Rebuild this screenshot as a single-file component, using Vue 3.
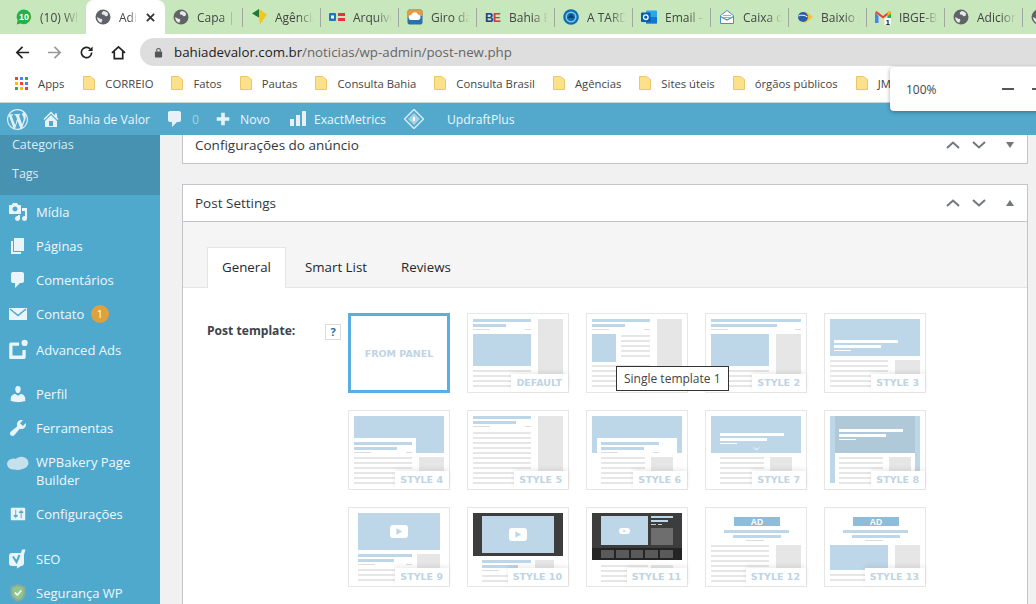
<script setup>
const GLOBE = '<circle cx="8" cy="8" r="7.5" fill="#5f6368"/><path d="M8.5 2c2 .1 3.6 1 4.6 2.5l-.6 2.6-2 .2-1.4-1.5-2-.2-.4-1.8L8.5 2zM2.2 8l3 1.8 1.7.2.5 1.5-1 1.5.2 1A6 6 0 0 1 2.2 8z" fill="#e8e8e8"/>'

const favicons = {
  globe: GLOBE,
  whats: '<path d="M8 .5a7.3 7.3 0 0 0-6.3 11L.7 15.4l4-1A7.3 7.3 0 1 0 8 .5z" fill="#25b04a"/><text x="8" y="11.2" font-size="9" font-weight="700" text-anchor="middle" fill="#fff" font-family="Liberation Sans, sans-serif">10</text>',
  agencia: '<path d="M8 0l8 5.500-7 10-1-7-7-4z" fill="#f5c518"/><path d="M8 0L1 4.500l7 4z" fill="#1b7a3d"/>',
  arquivo: '<rect x="0" y="4" width="7" height="8" rx="1" fill="#1c75bc"/><rect x="2" y="6.5" width="3" height="3" fill="#fff"/><rect x="9" y="4" width="7" height="3" fill="#e2343c"/><rect x="9" y="9" width="7" height="3" fill="#e2343c"/>',
  giro: '<rect x=".5" y=".5" width="15" height="15" rx="2" fill="#2a6fb0"/><path d="M.5 8V3A2.500 2.500 0 0 1 3 .5h10A2.500 2.500 0 0 1 15.500 3v4z" fill="#e99a3c"/><path d="M4 11a2.500 2.500 0 0 1 .3-5 3.500 3.500 0 0 1 6.700-.5 2.800 2.800 0 0 1 .5 5.500z" fill="#fff"/>',
  be: '<text x="0" y="12.500" font-size="12" font-weight="700" fill="#1d3f8f" font-family="Liberation Sans, sans-serif">B</text><text x="8" y="12.500" font-size="12" font-weight="700" fill="#e2343c" font-family="Liberation Sans, sans-serif">E</text>',
  tarde: '<circle cx="8" cy="8" r="7.800" fill="#0f6cb0"/><circle cx="8" cy="8" r="4.800" fill="none" stroke="#7cc6ee" stroke-width="1.600"/><path d="M4.500 9L8 5l3.500 4z" fill="#0b3f70"/>',
  outlook: '<rect x="5" y="1.500" width="11" height="13" rx="1" fill="#28a8ea"/><rect x="5" y="8" width="11" height="6.500" fill="#0f78d4"/><rect x="0" y="3.500" width="9.500" height="9.500" rx="1" fill="#0a5ca8"/><circle cx="4.800" cy="8.200" r="2.300" fill="none" stroke="#fff" stroke-width="1.300"/>',
  caixa: '<path d="M1.500 6.500L8 1.500l6.500 5v8h-13z" fill="#fff" stroke="#4b8fc7"/><path d="M4 6.500h8M4.500 8.500h7" stroke="#e9a23b" stroke-width="1"/><path d="M1.500 7.500L8 11l6.500-3.500" fill="none" stroke="#4b8fc7" stroke-width="1.200"/>',
  baixio: '<path d="M8 2l8 6-8 6-2-1z" fill="#f2c230"/><circle cx="6" cy="8" r="5" fill="#2a5cae"/><path d="M1.500 7c3-1.500 6-1 9 1" stroke="#fff" fill="none"/>',
  gmail: '<path d="M0 3.500v10.500h3.500V7z" fill="#4285f4"/><path d="M16 3.500v6h-3.500V7z" fill="#34a853"/><path d="M0 3.500L8 9.500l8-6-1.500-1.500L8 7 1.500 2z" fill="#ea4335"/><path d="M12.500 3v4L16 4.500 14.500 2z" fill="#fbbc04"/><rect x="9.500" y="9" width="6.500" height="7" fill="#fff"/><text x="12.700" y="15.500" font-size="8" font-weight="700" text-anchor="middle" fill="#222" font-family="Liberation Sans, sans-serif">1</text>',
}

const tabs = [
  { icon: 'whats', title: '(10) WhatsApp' },
  { icon: 'globe', title: 'Adicionar', active: true },
  { icon: 'globe', title: 'Capa | Bahia' },
  { icon: 'agencia', title: 'Agência Brasil' },
  { icon: 'arquivo', title: 'Arquivo Aberto' },
  { icon: 'giro', title: 'Giro da Bahia' },
  { icon: 'be', title: 'Bahia Econômica' },
  { icon: 'tarde', title: 'A TARDE' },
  { icon: 'outlook', title: 'Email – Outlook' },
  { icon: 'caixa', title: 'Caixa de entrada' },
  { icon: 'baixio', title: 'Baixio do Brasil' },
  { icon: 'gmail', title: 'IBGE-Bahia' },
  { icon: 'globe', title: 'Adicionar' },
  { icon: 'globe', title: 'Adicionar' },
]

const bookmarks = ['CORREIO', 'Fatos', 'Pautas', 'Consulta Bahia', 'Consulta Brasil', 'Agências', 'Sites úteis', 'órgãos públicos', 'JM Online']
const appColors = ['#ea4335', '#4285f4', '#34a853', '#fbbc04', '#ea4335', '#4285f4', '#34a853', '#fbbc04', '#ea4335']

const menuIcons = {
  media: '<path d="M13 11V4c0-.55-.45-1-1-1h-1.670L9 1H5L3.670 3H2c-.55 0-1 .45-1 1v7c0 .55.45 1 1 1h10c.55 0 1-.45 1-1zM7 4.500c1.380 0 2.500 1.120 2.500 2.500S8.380 9.500 7 9.500 4.500 8.380 4.500 7 5.620 4.500 7 4.500zM14 6h5v10.500c0 1.380-1.120 2.500-2.500 2.500S14 17.880 14 16.500s1.120-2.500 2.500-2.500c.17 0 .34.02.5.05V9h-3V6zm-4 8.050V13h2v3.500c0 1.380-1.120 2.500-2.500 2.500S7 17.880 7 16.500 8.120 14 9.500 14c.17 0 .34.02.5.05z"/>',
  pages: '<path d="M6 15V2h10v13H6zm-1 1h8v2H3V5h2v11z"/>',
  comments: '<path d="M5 2h9c1.100 0 2 .9 2 2v7c0 1.100-.9 2-2 2h-2l-5 5v-5H5c-1.100 0-2-.9-2-2V4c0-1.100.9-2 2-2z"/>',
  mail: '<path d="M1 4h18v12H1z"/><path d="M2 5l8 6.500L18 5" fill="none" stroke="#4fa9cd" stroke-width="1.500"/>',
  ads: '<path d="M2 5.500A1.500 1.500 0 0 1 3.500 4H11v3H5v9h9v-5h3v6.500a1.500 1.500 0 0 1-1.500 1.500h-12A1.500 1.500 0 0 1 2 18.500z"/><circle cx="16" cy="4.500" r="2.800"/>',
  user: '<path d="M10 9.250c-2.270 0-2.730-3.440-2.730-3.440C7 4.020 7.820 2 9.970 2c2.160 0 2.980 2.020 2.710 3.810 0 0-.41 3.440-2.680 3.440zm0 2.570L12.720 10c2.390 0 4.520 2.330 4.520 4.530v2.490s-3.650 1.130-7.240 1.130c-3.650 0-7.240-1.130-7.240-1.130v-2.490c0-2.250 1.940-4.480 4.470-4.480z"/>',
  tools: '<path d="M16.680 9.770c-1.340 1.340-3.300 1.670-4.950.99l-5.410 6.520c-.99.99-2.590.99-3.580 0s-.99-2.590 0-3.570l6.520-5.420c-.68-1.650-.35-3.610.99-4.950 1.280-1.280 3.120-1.620 4.720-1.060l-2.890 2.890 2.820 2.820 2.860-2.870c.53 1.580.18 3.390-1.080 4.650z"/>',
  cloud: '<ellipse cx="6" cy="10" rx="6" ry="5"/><ellipse cx="13" cy="9" rx="6.500" ry="5.500"/><ellipse cx="10" cy="12" rx="5" ry="3.500"/>',
  settings: '<path d="M18 16V4c0-.55-.45-1-1-1H3c-.55 0-1 .45-1 1v12c0 .55.45 1 1 1h14c.55 0 1-.45 1-1zM8 11h1c.55 0 1 .45 1 1s-.45 1-1 1H8v1.500c0 .28-.22.5-.5.5s-.5-.22-.5-.5V13H6c-.55 0-1-.45-1-1s.45-1 1-1h1V5.500c0-.28.22-.5.5-.5s.5.22.5.5V11zm5-2h-1c-.55 0-1-.45-1-1s.45-1 1-1h1V5.500c0-.28.22-.5.5-.5s.5.22.5.5V7h1c.55 0 1 .45 1 1s-.45 1-1 1h-1v5.500c0 .28-.22.5-.5.5s-.5-.22-.5-.5V9z"/>',
  seo: '<rect x="1" y="4" width="15" height="13" rx="3"/><path d="M14 .5h3.500l-5 17-4 2 1-3z"/><path d="M5 7.500l3.500 5.500L11.500 6" fill="none" stroke="#4fa9cd" stroke-width="2"/>',
  shield: '<path d="M10 1l7.500 2.500v6c0 4.500-3 8-7.500 9.500-4.500-1.500-7.500-5-7.500-9.500v-6z" fill="#8fa7a0"/><path d="M10 3l5.500 2v4.500c0 3.500-2.200 6-5.500 7.300-3.300-1.300-5.500-3.800-5.500-7.300V5z" fill="#8ec98a"/><path d="M7 9.500l2.300 2.500 4-4.500" fill="none" stroke="#fff" stroke-width="1.600"/>',
}

const menu = [
  { icon: 'media', label: 'Mídia' },
  { icon: 'pages', label: 'Páginas' },
  { icon: 'comments', label: 'Comentários' },
  { icon: 'mail', label: 'Contato', badge: 1 },
  { icon: 'ads', label: 'Advanced Ads', gapAfter: true, pushed: true },
  { icon: 'user', label: 'Perfil' },
  { icon: 'tools', label: 'Ferramentas' },
  { icon: 'cloud', label: 'WPBakery Page Builder', tall: true },
  { icon: 'settings', label: 'Configurações', gapAfter: true },
  { icon: 'seo', label: 'SEO' },
  { icon: 'shield', label: 'Segurança WP' },
]

const BLUE = '#bed7e8'
const GREY = '#e6e6e6'
const META = '#dcdcdc'
const WHITE = '#ffffff'

const r = (x1, y1, x2, y2, fill = GREY, rx = 0) => ({ x: x1, y: y1, width: x2 - x1, height: y2 - y1, fill, rx })
const rows = (x1, x2, ys, fill = GREY) => ys.map((y) => r(x1, y, x2, y + 2, fill))
const head = (x, a, b, y, end, color = BLUE, meta = META) => [
  r(x, y, a, y + 3, color),
  r(x, y + 5, b, y + 8, color),
  r(x, y + 10, x + 17, y + 11, meta),
  ...(end ? [r(end - 6, y + 10, end, y + 11, meta)] : []),
]
const play = (x, y, w, h) => [r(x, y, x + w, y + h, WHITE, 3)]
const playTri = (x, y, w, h) => {
  const cx = x + w / 2
  const cy = y + h / 2
  const s = h / 4
  return { d: `M${cx - s * 0.8} ${cy - s}L${cx + s} ${cy}L${cx - s * 0.8} ${cy + s}z`, fill: BLUE }
}
const adLines = () => [r(19, 23, 84, 26, BLUE), r(28, 28, 76, 31, BLUE), r(41, 33, 59, 34, META)]

const thumbs = [
  { label: 'FROM PANEL', selected: true, shapes: [] },
  {
    label: 'DEFAULT',
    shapes: [...head(6, 64, 39, 6, 64), r(6, 21, 64, 53, BLUE), r(71, 6, 96, 61), ...rows(6, 64, [57, 62, 67, 72])],
  },
  {
    label: 'STYLE 1',
    tooltip: 'Single template 1',
    shapes: [
      ...head(6, 64, 39, 6, 64), r(6, 21, 30, 49, BLUE), ...rows(35, 64, [22, 27, 32, 37, 42]),
      r(71, 6, 96, 61), ...rows(6, 64, [52, 57, 62, 67, 72]),
    ],
  },
  {
    label: 'STYLE 2',
    shapes: [
      r(6, 6, 96, 9, BLUE), r(6, 11, 72, 14, BLUE), r(6, 16, 23, 17, META), r(90, 16, 96, 17, META),
      r(6, 21, 64, 53, BLUE), r(71, 21, 96, 61), ...rows(6, 64, [57, 62, 67, 72]),
    ],
  },
  {
    label: 'STYLE 3',
    shapes: [
      r(6, 6, 96, 43, BLUE), r(10, 27, 74, 30, WHITE), r(10, 32, 57, 35, WHITE), r(10, 37, 27, 38, WHITE),
      ...rows(6, 64, [47, 52, 57, 62, 67, 72]), r(71, 47, 96, 61),
    ],
  },
  {
    label: 'STYLE 4',
    shapes: [
      r(6, 6, 96, 43, BLUE), r(6, 28, 68, 43, WHITE), ...head(6, 64, 49, 32, 64),
      ...rows(6, 64, [47, 52, 57, 62, 67, 72]), r(71, 47, 96, 61),
    ],
  },
  {
    label: 'STYLE 5',
    shapes: [...head(6, 64, 49, 6, 64), ...rows(6, 64, [22, 27, 32, 37, 42, 47, 52, 57, 62, 67, 72]), r(71, 6, 96, 61)],
  },
  {
    label: 'STYLE 6',
    shapes: [
      r(6, 6, 96, 43, BLUE), r(11, 28, 91, 43, WHITE), ...head(15, 73, 58, 32, 73),
      ...rows(15, 59, [47, 52, 57, 62, 67, 72]), r(65, 47, 87, 61),
    ],
  },
  {
    label: 'STYLE 7',
    shapes: [
      r(6, 6, 96, 43, BLUE), r(15, 23, 79, 26, WHITE), r(15, 28, 62, 31, WHITE), r(15, 33, 32, 34, WHITE),
      ...rows(15, 59, [47, 52, 57, 62, 67, 72]), r(65, 47, 87, 61),
    ],
    paths: [{ d: 'M49 37.500l2.500 2.500 2.500-2.500', stroke: WHITE }],
  },
  {
    label: 'STYLE 8',
    shapes: [
      r(6, 6, 96, 73, BLUE), r(11, 6, 91, 43, '#afc9d8'), r(11, 43, 91, 80, WHITE),
      r(15, 19, 79, 22, WHITE), r(15, 24, 62, 27, WHITE), r(15, 29, 32, 30, WHITE),
      ...rows(15, 59, [47, 52, 57, 62, 67, 72]), r(65, 47, 87, 61),
    ],
  },
  {
    label: 'STYLE 9',
    shapes: [
      r(10, 6, 92, 43, BLUE), ...play(42, 18, 18, 13), ...head(10, 64, 46, 47, 64),
      ...rows(10, 64, [62, 67, 72]), r(69, 47, 92, 61),
    ],
    paths: [playTri(42, 18, 18, 13)],
  },
  {
    label: 'STYLE 10',
    shapes: [
      r(6, 6, 96, 49, '#3d3d3d'), r(15, 9, 87, 46, BLUE), ...play(42, 21, 18, 13), ...head(15, 64, 51, 53, 64),
      ...rows(15, 64, [68, 73]), r(68, 53, 87, 61),
    ],
    paths: [playTri(42, 21, 18, 13)],
  },
  {
    label: 'STYLE 11',
    shapes: [
      r(6, 6, 96, 41, '#3d3d3d'), r(6, 41, 96, 53, '#242424'), r(15, 9, 62, 38, BLUE), ...play(33, 21, 11, 6),
      r(65, 9, 87, 11, BLUE), r(65, 13, 82, 15, BLUE), r(65, 17, 70, 18, '#cccccc'), r(72, 17, 76, 18, '#cccccc'),
      r(65, 21, 87, 38, '#6e6e6e'),
      r(15, 43, 28, 51, '#5a5a5a'), r(30, 43, 43, 51, '#5a5a5a'), r(45, 43, 57, 51, '#5a5a5a'),
      r(59, 43, 72, 51, '#5a5a5a'), r(74, 43, 87, 51, '#5a5a5a'),
      ...rows(15, 62, [58, 63, 68, 73]), r(65, 58, 87, 61),
    ],
    paths: [playTri(33, 21, 11, 6)],
  },
  {
    label: 'STYLE 12',
    adBar: true,
    shapes: [
      r(29, 10, 75, 19, '#8fbcd9'), ...adLines(), ...rows(6, 64, [38, 43, 48, 53, 58, 63, 68, 73]), r(71, 38, 96, 61),
    ],
  },
  {
    label: 'STYLE 13',
    adBar: true,
    shapes: [
      r(29, 10, 75, 19, '#8fbcd9'), ...adLines(), r(6, 38, 64, 63, BLUE), r(71, 38, 96, 61), ...rows(6, 64, [67, 72]),
    ],
  },
]
</script>

<template>
  <div class="screen">
    <!-- browser -->
    <div class="tabstrip">
      <div v-for="(t, i) in tabs" :key="i" class="tab" :class="{ active: t.active }">
        <svg class="fav" viewBox="0 0 16 16" v-html="favicons[t.icon]"></svg>
        <span class="tab-title" :class="{ short: t.active }">{{ t.title }}</span>
        <svg v-if="t.active" class="tab-close" viewBox="0 0 10 10"><path d="M1 1l8 8M9 1l-8 8" /></svg>
      </div>
    </div>

    <div class="toolbar">
      <svg class="nav" viewBox="0 0 16 16"><path d="M15 8H2M8 2L2 8l6 6" fill="none" stroke="#222" stroke-width="1.800" /></svg>
      <svg class="nav" viewBox="0 0 16 16"><path d="M1 8h13M8 2l6 6-6 6" fill="none" stroke="#999" stroke-width="1.800" /></svg>
      <svg class="nav" viewBox="0 0 16 16"><path d="M13.500 8a5.500 5.500 0 1 1-1.600-3.900" fill="none" stroke="#222" stroke-width="1.800" /><path d="M14.500 1.500v5h-5z" fill="#222" /></svg>
      <svg class="nav" viewBox="0 0 16 16"><path d="M1 8.500L8 2l7 6.500M3.500 7v7.500h9V7" fill="none" stroke="#222" stroke-width="1.800" /></svg>
      <div class="omnibox">
        <svg class="lock" viewBox="0 0 10 12"><rect x="1" y="5" width="8" height="6.500" rx="1" fill="#555" /><path d="M3 5V3.500a2 2 0 0 1 4 0V5" fill="none" stroke="#555" stroke-width="1.200" /></svg>
        <span class="url"><b>bahiadevalor.com.br</b>/noticias/wp-admin/post-new.php</span>
      </div>
    </div>

    <div class="bookmarks">
      <div class="apps-grid">
        <i v-for="(c, i) in appColors" :key="i" :style="{ background: c }"></i>
      </div>
      <span class="bm-text apps-label">Apps</span>
      <div v-for="b in bookmarks" :key="b" class="bm">
        <svg class="folder" viewBox="0 0 12 14"><path d="M.5.500h7l4 3v10H.500z" fill="#fde08a" stroke="#e8c868" /></svg>
        <span class="bm-text">{{ b }}</span>
      </div>
    </div>

    <div class="zoom-pop">
      <span>100%</span>
      <i class="zoom-minus"></i>
      <i class="zoom-plus"></i>
    </div>

    <!-- wordpress -->
    <div class="adminbar">
      <svg class="wp-logo" viewBox="0 0 20 20"><path d="M20 10c0-5.510-4.490-10-10-10C4.480 0 0 4.490 0 10c0 5.520 4.480 10 10 10 5.510 0 10-4.480 10-10zM7.780 15.370L4.370 6.220c.55-.02 1.170-.08 1.170-.08.5-.06.44-1.130-.06-1.110 0 0-1.450.11-2.370.11-.18 0-.37 0-.58-.01C4.120 2.690 6.870 1.110 10 1.110c2.330 0 4.450.87 6.050 2.340-.68-.11-1.650.39-1.650 1.580 0 .74.45 1.360.9 2.100.35.61.55 1.360.55 2.460 0 1.490-1.400 5-1.400 5l-3.030-8.370c.54-.02.82-.17.82-.17.5-.05.44-1.250-.06-1.220 0 0-1.440.12-2.380.12-.87 0-2.330-.12-2.330-.12-.5-.03-.56 1.200-.06 1.220l.92.08 1.260 3.410zM17.410 10c.24-.64.74-1.870.43-4.250.7 1.290 1.050 2.710 1.050 4.250 0 3.290-1.730 6.240-4.400 7.780.97-2.590 1.940-5.200 2.920-7.780zM6.100 18.090C3.120 16.650 1.110 13.530 1.110 10c0-1.300.23-2.480.72-3.590C3.250 10.300 4.670 14.200 6.100 18.090zm4.030-6.630l2.580 6.980c-.86.29-1.760.45-2.710.45-.79 0-1.570-.11-2.290-.33.81-2.380 1.620-4.740 2.420-7.100z" /></svg>
      <div class="ab-item home">
        <svg viewBox="0 0 20 20"><path d="M16 8.500l1.530 1.530-1.060 1.060L10 4.620l-6.470 6.470-1.060-1.060L10 2.500l4 4v-2h2v4zm-6-2.460l6 5.990V18H4v-5.970zM12 17v-5H8v5h4z" /></svg>
        <span>Bahia de Valor</span>
      </div>
      <div class="ab-item comments">
        <svg viewBox="0 0 20 20"><path d="M5 2h9c1.100 0 2 .9 2 2v7c0 1.100-.9 2-2 2h-2l-5 5v-5H5c-1.100 0-2-.9-2-2V4c0-1.100.9-2 2-2z" /></svg>
        <span class="dim">0</span>
      </div>
      <div class="ab-item novo">
        <svg viewBox="0 0 20 20"><path d="M8 3h4v5h5v4h-5v5H8v-5H3V8h5z" /></svg>
        <span>Novo</span>
      </div>
      <div class="ab-item metrics">
        <svg viewBox="0 0 16 16"><path d="M0 8h4v7H0zM6 4h4v11H6zM12 0h4v15h-4z" /></svg>
        <span>ExactMetrics</span>
      </div>
      <svg class="diamond" viewBox="0 0 20 20"><path d="M10 .5L19.500 10 10 19.500.5 10z" fill="none" stroke="#d7ebf3" stroke-width="1.500" /><path d="M10 4l6 6-6 6-6-6z" fill="#a9d3e5" /><path d="M9 8h2v4H9z" fill="#fff" /></svg>
      <span class="ab-updraft">UpdraftPlus</span>
    </div>

    <div class="main">
      <aside class="sidebar">
        <div class="submenu">
          <div>Categorias</div>
          <div>Tags</div>
        </div>
        <div
          v-for="m in menu"
          :key="m.label"
          class="menu-item"
          :class="{ tall: m.tall, gap: m.gapAfter, pushed: m.pushed }"
        >
          <svg class="menu-icon" :class="'ic-' + m.icon" viewBox="0 0 20 20" v-html="menuIcons[m.icon]"></svg>
          <span class="menu-label">{{ m.label }}</span>
          <span v-if="m.badge" class="menu-badge">{{ m.badge }}</span>
        </div>
      </aside>

      <section class="content">
        <div class="postbox first">
          <div class="box-head">
            <span>Configurações do anúncio</span>
            <div class="box-ctrl">
              <svg viewBox="0 0 14 8"><path d="M1 7l6-5.500L13 7" /></svg>
              <svg viewBox="0 0 14 8"><path d="M1 1l6 5.500L13 1" /></svg>
              <i class="tri down"></i>
            </div>
          </div>
        </div>

        <div class="postbox">
          <div class="box-head bordered">
            <span>Post Settings</span>
            <div class="box-ctrl">
              <svg viewBox="0 0 14 8"><path d="M1 7l6-5.500L13 7" /></svg>
              <svg viewBox="0 0 14 8"><path d="M1 1l6 5.500L13 1" /></svg>
              <i class="tri up"></i>
            </div>
          </div>

          <div class="tabs-band">
            <div class="set-tab on">General</div>
            <div class="set-tab">Smart List</div>
            <div class="set-tab">Reviews</div>
          </div>

          <div class="form-row">
            <label class="form-label">Post template:</label>
            <span class="help">?</span>
            <div class="thumb-grid">
              <div v-for="t in thumbs" :key="t.label" class="thumb" :class="{ selected: t.selected }">
                <template v-if="t.selected">
                  <span class="panel-text">{{ t.label }}</span>
                </template>
                <template v-else>
                  <svg class="thumb-art" viewBox="0 0 102 80" width="102" height="80">
                    <rect
                      v-for="(s, i) in t.shapes"
                      :key="i"
                      :x="s.x"
                      :y="s.y"
                      :width="s.width"
                      :height="s.height"
                      :rx="s.rx"
                      :fill="s.fill"
                    />
                    <path
                      v-for="(p, i) in t.paths"
                      :key="'p' + i"
                      :d="p.d"
                      :fill="p.fill || 'none'"
                      :stroke="p.stroke || 'none'"
                    />
                    <text
                      v-if="t.adBar"
                      x="52"
                      y="17.500"
                      font-size="8.500"
                      font-weight="700"
                      text-anchor="middle"
                      fill="#fff"
                      font-family="Liberation Sans, sans-serif"
                    >AD</text>
                  </svg>
                  <span class="thumb-label">{{ t.label }}</span>
                </template>
                <span v-if="t.tooltip" class="tooltip">{{ t.tooltip }}</span>
              </div>
            </div>
          </div>
        </div>
      </section>
    </div>
  </div>
</template>

<style>
html, body { margin: 0; overflow: hidden; background: #f1f1f1; }
</style>

<style scoped>
.screen {
  position: relative;
  width: 1036px;
  height: 604px;
  overflow: hidden;
  display: flex;
  flex-direction: column;
  font-family: "Open Sans", "Noto Sans", sans-serif;
  background: #f1f1f1;
}

/* chrome tabs */
.tabstrip {
  display: flex;
  height: 34px;
  flex: none;
  padding-left: 8px;
  background: #c9e7bd;
  overflow: hidden;
}
.tab {
  flex: none;
  width: 78px;
  box-sizing: border-box;
  display: flex;
  align-items: center;
  padding-left: 8px;
  position: relative;
}
.tab::after {
  content: "";
  position: absolute;
  right: 0;
  top: 8px;
  height: 19px;
  width: 1px;
  background: #a0a8a0;
}
.tab:nth-child(1)::after,
.tab.active::after { display: none; }
.tab.active {
  width: 79px;
  background: #fff;
  border-radius: 8px 8px 0 0;
  padding-left: 9px;
}
.fav { width: 16px; height: 16px; flex: none; }
.tab-title {
  margin-left: 8px;
  width: 39px;
  overflow: hidden;
  white-space: nowrap;
  font-size: 12px;
  color: #444;
  -webkit-mask-image: linear-gradient(to right, #000 60%, transparent 100%);
  mask-image: linear-gradient(to right, #000 60%, transparent 100%);
}
.tab-title.short { width: 18px; }
.tab-close {
  width: 9px;
  height: 9px;
  margin-left: 9px;
  fill: none;
  stroke: #333;
  stroke-width: 2;
}

/* toolbar */
.toolbar {
  height: 32px;
  flex: none;
  display: flex;
  align-items: flex-end;
  background: #fff;
  padding-left: 15px;
}
.nav {
  width: 15px;
  height: 15px;
  margin-right: 17px;
  margin-bottom: 6px;
  flex: none;
}
.omnibox {
  flex: 1;
  height: 28px;
  margin-left: -3px;
  border-radius: 14px 0 0 14px;
  background: #dedede;
  display: flex;
  align-items: center;
  padding-left: 14px;
}
.lock { width: 9px; height: 11px; flex: none; }
.url {
  margin-left: 11px;
  font-size: 13.3px;
  color: #666;
  white-space: nowrap;
}
.url b { font-weight: 400; color: #222; }

/* bookmarks */
.bookmarks {
  height: 37px;
  flex: none;
  display: flex;
  align-items: center;
  box-sizing: border-box;
  background: #fff;
  border-bottom: 1px solid #c8d4d8;
  padding: 0 0 2px 15px;
  overflow: hidden;
  white-space: nowrap;
}
.apps-grid {
  width: 13px;
  display: grid;
  grid-template-columns: repeat(3, 3px);
  gap: 2px;
  flex: none;
}
.apps-grid i { height: 3px; display: block; }
.apps-label { margin-left: 10px; margin-right: 19px; }
.bm { display: flex; align-items: center; margin-right: 18px; flex: none; }
.folder { width: 12px; height: 14px; margin-right: 10px; flex: none; }
.bm-text { font-size: 11.3px; color: #444; }

/* zoom bubble */
.zoom-pop {
  position: absolute;
  left: 890px;
  top: 67px;
  width: 160px;
  height: 44px;
  box-sizing: border-box;
  padding-left: 16px;
  background: #fff;
  border-radius: 4px;
  box-shadow: 0 1px 4px rgba(0, 0, 0, 0.35);
  display: flex;
  align-items: center;
  font-size: 12px;
  color: #444;
  z-index: 5;
}
.zoom-minus, .zoom-plus {
  position: absolute;
  top: 21px;
  height: 2px;
  background: #555;
}
.zoom-minus { left: 112px; width: 12px; }
.zoom-plus { left: 142px; width: 12px; }

/* admin bar */
.adminbar {
  height: 32px;
  flex: none;
  display: flex;
  align-items: center;
  background: #52a9cc;
  color: #eef6fa;
  font-size: 12.2px;
  padding-left: 7px;
  white-space: nowrap;
}
.wp-logo { width: 21px; height: 21px; fill: #e2f0f6; flex: none; }
.ab-item { display: flex; align-items: center; flex: none; }
.ab-item svg { fill: #e6f2f7; flex: none; }
.home { margin-left: 15px; }
.home svg { width: 20px; height: 20px; margin-right: 7px; margin-left: -2px; }
.comments { margin-left: 15px; }
.comments svg { width: 20px; height: 20px; margin-right: 7px; }
.dim { color: #a6d2e4; }
.novo { margin-left: 16px; }
.novo svg { width: 18px; height: 18px; margin-right: 8px; margin-left: -1px; }
.metrics { margin-left: 20px; }
.metrics svg { width: 16px; height: 16px; margin-right: 8px; }
.diamond { width: 20px; height: 20px; margin-left: 18px; flex: none; }
.ab-updraft { margin-left: 23px; }

/* layout */
.main { flex: 1; display: flex; min-height: 0; }
.sidebar {
  width: 160px;
  flex: none;
  background: #4fa9cd;
  color: #f0f8fb;
  font-size: 13px;
  overflow: hidden;
}
.submenu {
  height: 60px;
  box-sizing: border-box;
  background: #4791b1;
  padding: 1px 0 0 12px;
  color: #dcedf4;
  font-size: 12.5px;
  line-height: 18px;
  display: flex;
  flex-direction: column;
  gap: 11px;
}
.menu-item {
  height: 34px;
  box-sizing: border-box;
  display: flex;
  align-items: center;
  position: relative;
  padding-left: 36px;
}
.menu-item.tall { height: 52px; line-height: 18px; }
.menu-item.gap { margin-bottom: 11px; }
.menu-item.pushed { height: 35px; padding-top: 2px; }
.menu-icon {
  position: absolute;
  left: 8px;
  top: 50%;
  width: 20px;
  height: 20px;
  margin-top: -10px;
  fill: #e9f5fa;
}
.ic-ads { left: 7px; width: 22px; height: 22px; margin-top: -11px; }
.ic-cloud { left: 7px; margin-top: -18px; width: 22px; height: 22px; fill: #c6e1ec; }
.ic-settings { width: 18px; height: 18px; margin-top: -9px; left: 9px; }
.menu-label { width: 112px; }
.menu-badge {
  width: 18px;
  height: 18px;
  border-radius: 50%;
  background: #dea13b;
  color: #fff;
  font-size: 11px;
  line-height: 18px;
  text-align: center;
  margin-left: -57px;
  flex: none;
}

/* content */
.content {
  flex: 1;
  min-width: 0;
  padding: 0 8px 0 22px;
}
.postbox {
  background: #fff;
  border: 1px solid #c3c4c7;
  color: #32373c;
}
.postbox.first {
  border-top: 0;
  margin-bottom: 20px;
}
.box-head {
  height: 36px;
  display: flex;
  align-items: center;
  justify-content: space-between;
  padding: 0 12px;
  font-size: 13.5px;
}
.first .box-head { height: 20px; padding-bottom: 8px; }
.box-head.bordered { border-bottom: 1px solid #c3c4c7; }
.box-ctrl {
  display: flex;
  align-items: center;
}
.box-ctrl svg {
  width: 14px;
  height: 8px;
  margin-right: 12px;
  fill: none;
  stroke: #72777c;
  stroke-width: 2;
}
.tri {
  display: block;
  width: 0;
  height: 0;
  margin-left: 8px;
  margin-right: 1px;
  border-left: 4px solid transparent;
  border-right: 4px solid transparent;
}
.tri.down { border-top: 6px solid #72777c; }
.tri.up { border-bottom: 6px solid #72777c; }

.tabs-band {
  height: 66px;
  box-sizing: border-box;
  display: flex;
  align-items: flex-end;
  padding-left: 24px;
  background: #f5f5f5;
  border-bottom: 1px solid #e5e5e5;
}
.set-tab {
  height: 41px;
  box-sizing: border-box;
  display: flex;
  align-items: center;
  padding: 0 17px 2px;
  font-size: 13.3px;
  color: #23282d;
  margin-bottom: -1px;
}
.set-tab.on {
  width: 79px;
  justify-content: center;
  padding: 0 0 2px;
  margin-right: 2px;
  background: #fff;
  border: 1px solid #e5e5e5;
  border-bottom: 0;
}
.form-row {
  display: flex;
  padding: 25px 0 30px 24px;
  background: #fff;
  min-height: 300px;
  box-sizing: border-box;
}
.form-label {
  width: 118px;
  flex: none;
  font-size: 12.1px;
  font-weight: 700;
  color: #3c434a;
  line-height: 18px;
  margin-top: 9px;
}
.help {
  width: 16px;
  height: 16px;
  box-sizing: border-box;
  flex: none;
  margin-top: 11px;
  margin-right: 7px;
  border: 1px solid #dcdcde;
  font-size: 11px;
  font-weight: 700;
  line-height: 14px;
  text-align: center;
  color: #2271a1;
}
.thumb-grid {
  display: grid;
  grid-template-columns: repeat(5, 102px);
  grid-auto-rows: 80px;
  gap: 17px;
}
.thumb {
  position: relative;
  width: 102px;
  height: 80px;
  box-sizing: border-box;
  background: #fff;
  outline: 1px solid #e6e6e6;
  outline-offset: -1px;
}
.thumb.selected {
  outline: 3px solid #5aaee0;
  outline-offset: -3px;
  display: flex;
  align-items: center;
  justify-content: center;
}
.panel-text, .thumb-label {
  font-family: "DejaVu Sans", sans-serif;
  font-weight: 700;
  font-size: 9.5px;
  color: #bfd4e2;
  white-space: nowrap;
}
.thumb-art { display: block; }
.thumb-label {
  position: absolute;
  right: 1px;
  bottom: 1px;
  height: 18px;
  line-height: 18px;
  padding: 0 6px 0 5px;
  background: #fff;
  box-shadow: 0 -2px 5px rgba(0, 0, 0, 0.08);
}
.tooltip {
  position: absolute;
  left: 30px;
  top: 53px;
  height: 25px;
  box-sizing: border-box;
  padding: 0 7px;
  background: #fff;
  border: 1px solid #333;
  font-size: 12px;
  line-height: 23px;
  color: #444;
  white-space: nowrap;
  z-index: 2;
}
</style>
